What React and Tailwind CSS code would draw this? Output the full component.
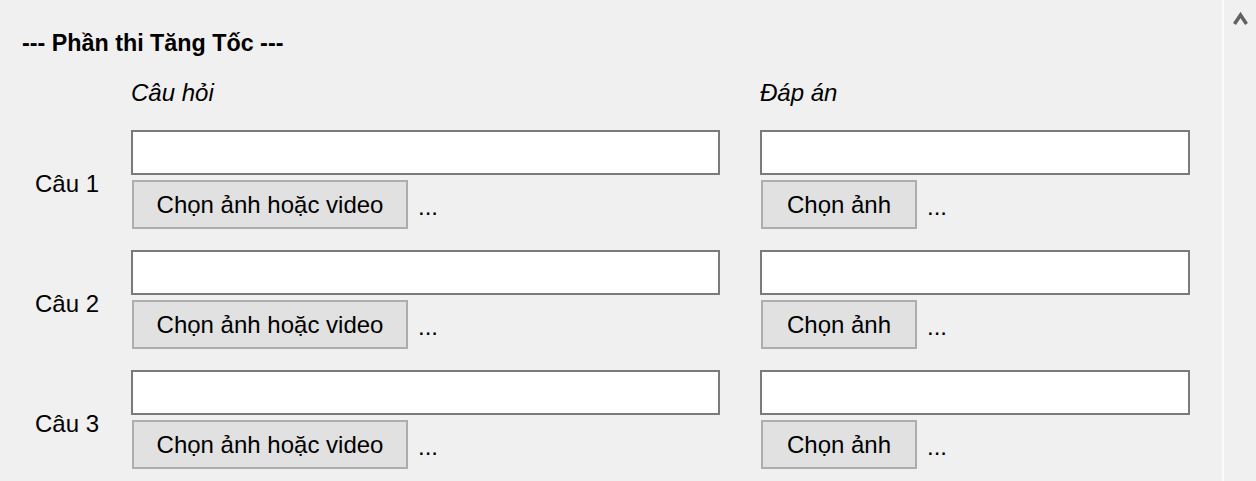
import React from 'react';

const rows = ['Câu 1', 'Câu 2', 'Câu 3'];

function FileButton({ label, width }) {
    return (
        <div className="flex items-center">
            <button
                className={`${width} h-[49px] ml-[1px] border-2 border-[#adadad] bg-[#e1e1e1] text-[24px] leading-[24px] text-black`}
            >
                {label}
            </button>
            <span className="ml-[10px] text-[24px] leading-[24px] pt-[4px]">...</span>
        </div>
    );
}

export default function App() {
    return (
        <div
            className="w-[1256px] h-[481px] overflow-hidden bg-[#f0f0f0] flex text-black"
            style={{ fontFamily: '"Liberation Sans", Arial, sans-serif' }}
        >
            <div className="w-[1222px] shrink-0">
                <h2 className="ml-[22px] mt-[31px] text-[23.3px] leading-[24px] font-bold">--- Phần thi Tăng Tốc ---</h2>

                {/* tieu de cot */}
                <div className="flex mt-[26px] text-[24px] leading-[24px] italic">
                    <div className="ml-[131px] w-[629px]">Câu hỏi</div>
                    <div>Đáp án</div>
                </div>

                <div className="flex flex-col gap-[21px] mt-[25px] pl-[35px]">
                    {rows.map(row => (
                        <div key={row} className="flex">
                            <div className="w-[96px] pt-[42px] text-[24px] leading-[24px]">{row}</div>

                            <div className="w-[589px] flex flex-col gap-[5px]">
                                <input type="text" className="h-[45px] w-[589px] border-2 border-[#7a7a7a] bg-white outline-none" />
                                <FileButton label="Chọn ảnh hoặc video" width="w-[276px]" />
                            </div>

                            <div className="ml-[40px] w-[430px] flex flex-col gap-[5px]">
                                <input type="text" className="h-[45px] w-[430px] border-2 border-[#7a7a7a] bg-white outline-none" />
                                <FileButton label="Chọn ảnh" width="w-[156px]" />
                            </div>
                        </div>
                    ))}
                </div>
            </div>

            {/* thanh cuon */}
            <div className="w-[2px] bg-[#fbfbfb]" />
            <div className="flex-1 flex justify-center pt-[12px]">
                <svg width="15" height="13" viewBox="0 0 15 13">
                    <polyline points="1.5,12 7.5,3 13.5,12" fill="none" stroke="#606060" strokeWidth="3.5" />
                </svg>
            </div>
        </div>
    );
}
